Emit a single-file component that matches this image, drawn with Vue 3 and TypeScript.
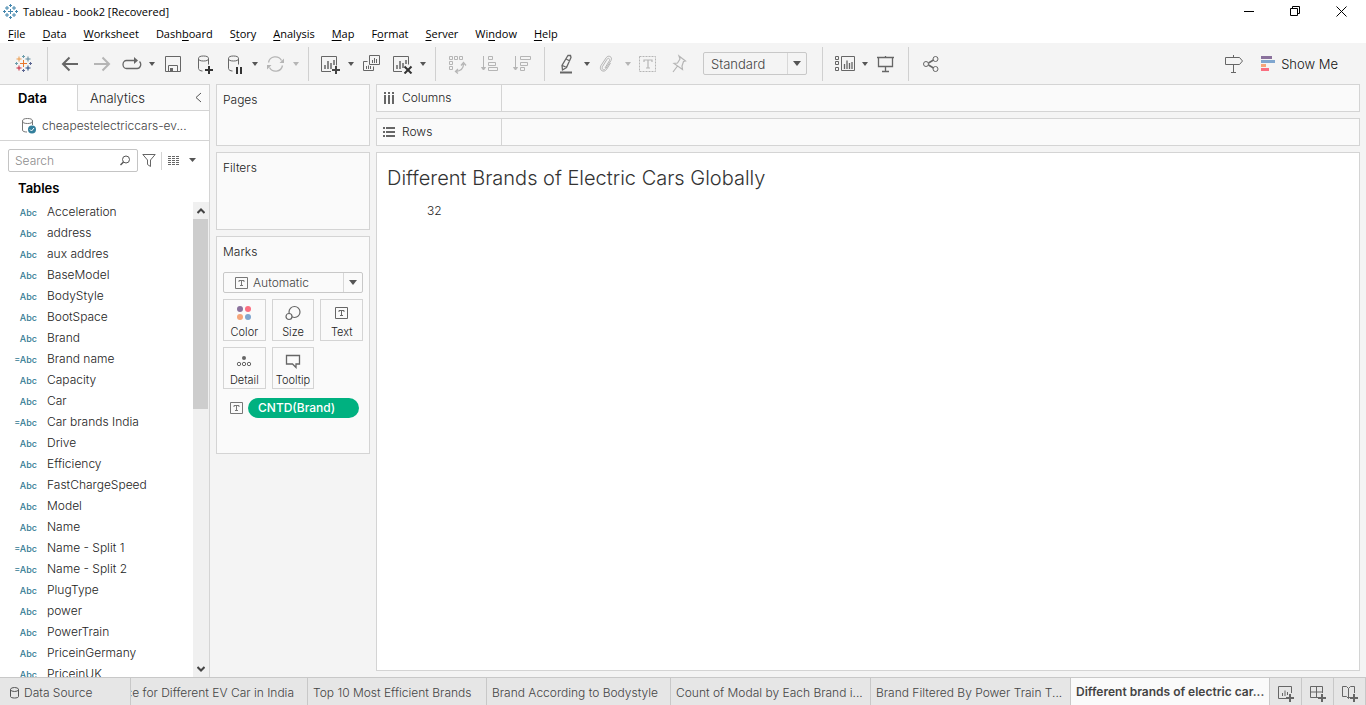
<script setup lang="ts">
import { ref } from 'vue'

interface MenuItem { before: string; key: string; after: string }
interface Tool { icon: string; label: string; caret?: boolean; disabled?: boolean }
interface Field { name: string; calculated?: boolean }
interface SheetTab { label: string; width: number; clipped?: boolean; active?: boolean }

const menu: MenuItem[] = [
  { before: '', key: 'F', after: 'ile' },
  { before: '', key: 'D', after: 'ata' },
  { before: '', key: 'W', after: 'orksheet' },
  { before: 'Dash', key: 'b', after: 'oard' },
  { before: 'S', key: 't', after: 'ory' },
  { before: '', key: 'A', after: 'nalysis' },
  { before: '', key: 'M', after: 'ap' },
  { before: 'F', key: 'o', after: 'rmat' },
  { before: '', key: 'S', after: 'erver' },
  { before: 'Wi', key: 'n', after: 'dow' },
  { before: '', key: 'H', after: 'elp' },
]

const icons: Record<string, string> = {
  back: '<path d="M19 11H4M10.500 4.500L4 11l6.500 6.500" stroke-width="2"/>',
  forward: '<path d="M4 11h15M12.500 4.500L19 11l-6.500 6.500" stroke-width="2"/>',
  replay: '<path d="M14 7.500H5.500a3.500 4 0 0 0 0 8h10.500a3.500 4 0 0 0 2.500-7" stroke-width="1.300"/><path d="M13 4l4 3.500-4 3.500z" fill="currentColor" stroke="none"/>',
  save: '<path d="M3.500 3.500h15v15h-15zM6.500 18.500v-6h9v6"/><path d="M8 15h3v4H8z" fill="currentColor" stroke="none"/>',
  dbAdd: '<ellipse cx="10.500" cy="5.500" rx="5" ry="2.500"/><path d="M5.500 5.500v10c0 1.500 2 2.500 4 2.500M15.500 5.500v6"/><path d="M16 13v8M12 17h8" stroke="#333" stroke-width="2"/>',
  dbPause: '<ellipse cx="9.500" cy="5.500" rx="5" ry="2.500"/><path d="M4.500 5.500v10c0 1.500 2 2.500 4 2.500M14.500 5.500v6"/><path d="M13 14v7M17 14v7" stroke="#333" stroke-width="2"/>',
  refresh: '<path d="M3.500 9.500a7 7 0 0 1 13-2M17.500 12.500a7 7 0 0 1-13 2" stroke-width="1.300"/><path d="M19 5.500v4.500h-4.500zM2 16.500V12h4.500z" fill="currentColor" stroke="none"/>',
  newSheet: '<path d="M11 18.500H1.500v-15h15v9"/><path d="M5 12v4M8 8v8M11 10v6M14 7v5" stroke-width="1.500"/><path d="M16 13v8M12 17h8" stroke="#444" stroke-width="2"/>',
  duplicate: '<path d="M8.500 2.500h10v9h-10zM6.500 8.500h-4v9h10v-4"/><path d="M11.500 7v3M13.500 5v5M15.500 6v4M5.500 13v3M7.500 12.500V16M9.500 13v3"/>',
  clearSheet: '<path d="M10 18.500H1.500v-15h15v8"/><path d="M5 12v4M8 8v8M11 10v5M14 7v4" stroke-width="1.500"/><path d="M12.500 13.500l7 7M19.500 13.500l-7 7" stroke="#333" stroke-width="2"/>',
  swap: '<path d="M2.500 3.500h3v3h-3zM7.500 3.500h3v3h-3zM12.500 3.500h3v3h-3zM2.500 8.500h3v3h-3zM2.500 13.500h3v3h-3z"/><path d="M16.500 11c0 4-3 7-8 7.500M14 12.500l2.500-3 2.500 3M11 16l-2.500 2.500 2.500 2" stroke-width="1.300"/>',
  sortAsc: '<path d="M4.500 3v13M9.500 3.500h4v3h-4zM9.500 9.500h7v3h-7zM9.500 14.500h9v3h-9z"/><path d="M2.500 14.500h4l-2 2.500z" fill="currentColor"/>',
  sortDesc: '<path d="M4.500 3v13M9.500 3.500h10v3h-10zM9.500 9.500h7v3h-7zM9.500 14.500h4v3h-4z"/><path d="M2.500 14.500h4l-2 2.500z" fill="currentColor"/>',
  highlight: '<path d="M11 4l1-1.500h2.500l.5 2-4.500 10-4 2.500-.5-4.500zM6.500 12.500l4 2M10 6l4 2" stroke-width="1.300"/><path d="M4 19.500h12" stroke-width="2"/>',
  clip: '<path d="M8 15l4.500-7.500c.8-2-1.500-3-2.500-1.200L5.500 13.500c-1.300 3 1.800 4.500 3.300 2L14 7.500c2-3.500-2.500-6-4.800-2.800L4 12.500c-2.500 5 3 7.500 5.500 4l4-6.500"/>',
  label: '<path d="M1.500 3.500h16v15h-16z" stroke-dasharray="2 1"/><path d="M6 9V7h8v2M10 7v8M8 15h4" stroke-width="1.200"/>',
  pin: '<path d="M10 3l6.500 5-2 .5-1.500 4.500.5 3.500-8.500-6 3.500-.5 2.500-4zM8.500 13l-4.500 6" stroke-width="1.200"/>',
  cards: '<path d="M1.500 3.500h3v3h-3zM1.500 8.500h3v3h-3zM1.500 14.500h3v3h-3zM7.500 3.500h13v14h-13z"/><path d="M10.500 11v5M13 7.500V16M15.500 10v6M18 9v7" stroke-width="1.300"/>',
  present: '<path d="M2 4.500h17M3.500 5v8.500h14V5M10.500 3v2M10.500 14v4M7 18.500h7" stroke-width="1.300"/>',
  share: '<circle cx="6" cy="11" r="2.500"/><circle cx="15.500" cy="6" r="2.500"/><circle cx="15.500" cy="16" r="2.500"/><path d="M8.500 10l5-3M8.500 12l5 3" stroke-width="1.500"/>',
  guide: '<path d="M10.500 2v2M2.500 4.500h14l3 3.500-3 3.500h-14zM10.500 12v7M8 19.500h5"/>',
}

const groups: Tool[][] = [
  [
    { icon: 'back', label: 'Undo' },
    { icon: 'forward', label: 'Redo', disabled: true },
    { icon: 'replay', label: 'Replay', caret: true },
    { icon: 'save', label: 'Save' },
    { icon: 'dbAdd', label: 'New data source' },
    { icon: 'dbPause', label: 'Pause auto updates', caret: true },
    { icon: 'refresh', label: 'Run update', caret: true, disabled: true },
  ],
  [
    { icon: 'newSheet', label: 'New worksheet', caret: true },
    { icon: 'duplicate', label: 'Duplicate' },
    { icon: 'clearSheet', label: 'Clear sheet', caret: true },
  ],
  [
    { icon: 'swap', label: 'Swap rows and columns', disabled: true },
    { icon: 'sortAsc', label: 'Sort ascending', disabled: true },
    { icon: 'sortDesc', label: 'Sort descending', disabled: true },
  ],
  [
    { icon: 'highlight', label: 'Highlight', caret: true },
    { icon: 'clip', label: 'Group members', caret: true, disabled: true },
    { icon: 'label', label: 'Show mark labels', disabled: true },
    { icon: 'pin', label: 'Fix axes', disabled: true },
  ],
  [
    { icon: 'cards', label: 'Show or hide cards', caret: true },
    { icon: 'present', label: 'Presentation mode' },
  ],
  [{ icon: 'share', label: 'Share' }],
]

const fields: Field[] = [
  { name: 'Acceleration' },
  { name: 'address' },
  { name: 'aux addres' },
  { name: 'BaseModel' },
  { name: 'BodyStyle' },
  { name: 'BootSpace' },
  { name: 'Brand' },
  { name: 'Brand name', calculated: true },
  { name: 'Capacity' },
  { name: 'Car' },
  { name: 'Car brands India', calculated: true },
  { name: 'Drive' },
  { name: 'Efficiency' },
  { name: 'FastChargeSpeed' },
  { name: 'Model' },
  { name: 'Name' },
  { name: 'Name - Split 1', calculated: true },
  { name: 'Name - Split 2', calculated: true },
  { name: 'PlugType' },
  { name: 'power' },
  { name: 'PowerTrain' },
  { name: 'PriceinGermany' },
  { name: 'PriceinUK' },
]

const textMark = '<path d="M.5.5h12v11H.5z"/><path d="M4 5V3.500h5V5M6.500 3.500v5M5 8.500h3"/>'

const marks = [
  { label: 'Color', art: '<g stroke="none"><circle cx="5" cy="4" r="3" fill="#8a719c"/><circle cx="13" cy="4" r="3" fill="#fa6e80"/><circle cx="5" cy="12" r="3" fill="#f5a57a"/><circle cx="13" cy="12" r="3" fill="#7fa6cf"/></g>' },
  { label: 'Size', art: '<circle cx="10.500" cy="7" r="5.500" stroke-width="1.200"/><circle cx="5" cy="11.500" r="3" fill="#fafafa" stroke-width="1.200"/>' },
  { label: 'Text', art: '<path d="M2.500 2.500h12v11h-12z"/><path d="M6 7V5.500h5V7M8.500 5.500v5M7 10.500h3"/>' },
  { label: 'Detail', art: '<circle cx="9" cy="5" r="2" fill="currentColor" stroke="none"/><circle cx="4" cy="11" r="1.700"/><circle cx="9" cy="11" r="1.700"/><circle cx="14" cy="11" r="1.700"/>' },
  { label: 'Tooltip', art: '<path d="M2.500 2.500h13v8.500h-3.500v3.500L8.500 11h-6z" stroke-width="1.300"/>' },
]

const sheets: SheetTab[] = [
  { label: 'Price for Different EV Car in India', width: 177, clipped: true },
  { label: 'Top 10 Most Efficient Brands', width: 179 },
  { label: 'Brand According to Bodystyle', width: 184 },
  { label: 'Count of Modal by Each Brand i...', width: 200 },
  { label: 'Brand Filtered By Power Train T...', width: 200 },
  { label: 'Different brands of electric car...', width: 199, active: true },
]

const adders = [
  { label: 'New Worksheet', art: '<path d="M9 13.500H1.500v-12h13V8"/><path d="M5.500 8v3M8 5.500V11M10.500 7v3"/>' },
  { label: 'New Dashboard', art: '<path d="M9 12.500H1.500v-11h12V8M7.500 1.500v11M1.500 7h12"/>' },
  { label: 'New Story', art: '<path d="M9 12l-1.500 1.500-2-2h-4v-10h4l2 2 2-2h4V8M7.500 3.500v10"/>' },
]

const search = ref('')
const fit = ref('Standard')
const markType = ref('Automatic')
</script>

<template>
  <div class="app">
    <header class="titlebar">
      <svg class="app-icon" width="15" height="15" viewBox="0 0 15 15" fill="none" stroke="#4386ad">
        <path d="M7.500 5v5M5 7.500h5M4 2v4M2 4h4M11 2v4M9 4h4M4 9v4M2 11h4M11 9v4M9 11h4M7.500 0v3M6 1.500h3M7.500 12v3M6 13.500h3M1.500 6v3M0 7.500h3M13.500 6v3M12 7.500h3" />
      </svg>
      <span class="window-title">Tableau - book2 [Recovered]</span>
      <div class="window-controls">
        <button type="button" aria-label="Minimize"><svg width="11" height="11" viewBox="0 0 11 11"><path d="M0 5.500h10" /></svg></button>
        <button type="button" aria-label="Restore"><svg width="11" height="11" viewBox="0 0 11 11"><path d="M.5 2.500h7v7h-7zM2.500 2.500v-2h7v7h-2" /></svg></button>
        <button type="button" aria-label="Close"><svg width="11" height="11" viewBox="0 0 11 11"><path d="M.5.5l10 10M10.500.5l-10 10" /></svg></button>
      </div>
    </header>

    <nav class="menubar">
      <button v-for="m in menu" :key="m.before + m.key + m.after" type="button">{{ m.before }}<u>{{ m.key }}</u>{{ m.after }}</button>
    </nav>

    <div class="toolbar" role="toolbar">
      <button class="start" type="button" aria-label="Start page">
        <svg width="19" height="19" viewBox="0 0 19 19" fill="none">
          <path d="M9.500 6v7M6 9.500h7" stroke="#e8762d" />
          <path d="M5 2.500v5M2.500 5h5" stroke="#eb9a4a" />
          <path d="M14 2.500v5M11.500 5h5" stroke="#5b879b" />
          <path d="M5 11.500v5M2.500 14h5" stroke="#c72037" />
          <path d="M14 11.500v5M11.500 14h5" stroke="#1f457e" />
          <path d="M9.500 1v3M8 2.500h3M2.500 8v3M1 9.500h3" stroke="#6d9dab" />
          <path d="M9.500 15v3M8 16.500h3M16.500 8v3M15 9.500h3" stroke="#5c6692" />
        </svg>
      </button>
      <div v-for="(group, gi) in groups" :key="gi" class="group" :class="{ spaced: gi === 2 }">
        <template v-for="tool in group" :key="tool.icon">
          <button class="tool" type="button" :class="{ dim: tool.disabled }" :aria-label="tool.label">
            <svg width="21" height="21" viewBox="0 0 21 21" v-html="icons[tool.icon]"></svg>
          </button>
          <button v-if="tool.caret" class="tool-caret" type="button" :class="{ dim: tool.disabled }" :aria-label="tool.label + ' options'">
            <svg width="6" height="4" viewBox="0 0 6 4"><path d="M0 0h6L3 4z" /></svg>
          </button>
        </template>
        <div v-if="gi === 3" class="picker fit">
          <select v-model="fit" aria-label="Fit">
            <option>Standard</option>
            <option>Entire View</option>
          </select>
          <svg width="8" height="5" viewBox="0 0 8 5"><path d="M0 0h8L4 5z" /></svg>
        </div>
      </div>
      <div class="right-tools">
        <button class="tool" type="button" aria-label="Data guide">
          <svg width="21" height="21" viewBox="0 0 21 21" v-html="icons.guide"></svg>
        </button>
        <button class="show-me" type="button">
          <svg width="15" height="15" viewBox="0 0 15 15">
            <path d="M0 0h11v3H0z" fill="#8a719c" /><path d="M0 4h14v3H0z" fill="#7fa6cf" />
            <path d="M0 8h5v3H0z" fill="#f5a57a" /><path d="M0 12h8v3H0z" fill="#fa6e80" />
          </svg>
          Show Me
        </button>
      </div>
    </div>

    <div class="workspace">
      <aside class="data-pane">
        <div class="pane-tabs">
          <button class="pane-tab current" type="button">Data</button>
          <button class="pane-tab other" type="button">
            Analytics
            <svg width="7" height="11" viewBox="0 0 7 11"><path d="M6 1L1 5.500 6 10" /></svg>
          </button>
        </div>
        <button class="source" type="button">
          <svg width="15" height="16" viewBox="0 0 15 16" fill="none" stroke="#777">
            <ellipse cx="5.500" cy="3" rx="5" ry="2.500" /><path d="M.5 3v9c0 1.500 2 2 4.500 2M10.500 3v4" />
            <circle cx="10" cy="11.500" r="4" fill="#337f9c" stroke="none" /><path d="M8 11.500l1.500 1.500 2.500-3" stroke="#fff" />
          </svg>
          cheapestelectriccars-ev...
        </button>
        <div class="search-row">
          <div class="search">
            <input v-model="search" type="text" placeholder="Search" aria-label="Search fields" />
            <svg width="11" height="11" viewBox="0 0 11 11" fill="none" stroke="#555"><circle cx="6" cy="4.500" r="3.500" /><path d="M3.500 7L.5 10" stroke-width="1.500" /></svg>
          </div>
          <button class="plain" type="button" aria-label="Filter fields">
            <svg width="14" height="13" viewBox="0 0 14 13" fill="none" stroke="#666"><path d="M.8.500h12.400L8.500 6v6.500L5.500 10.500V6z" /></svg>
          </button>
          <button class="plain view" type="button" aria-label="View options">
            <svg width="12" height="10" viewBox="0 0 12 10" stroke="#666" stroke-dasharray="3 1"><path d="M0 .5h12M0 2.500h12M0 4.500h12M0 6.500h12M0 8.500h12" /></svg>
            <svg width="7" height="5" viewBox="0 0 7 5"><path d="M0 0h7L3.500 4z" fill="#555" /></svg>
          </button>
        </div>
        <h2 class="tables">Tables</h2>
        <div class="list-area">
          <ul class="fields">
            <li v-for="f in fields" :key="f.name">
              <span class="type"><i v-if="f.calculated">=</i>Abc</span><span>{{ f.name }}</span>
            </li>
          </ul>
          <div class="scrollbar">
            <button type="button" aria-label="Scroll up"><svg width="8" height="6" viewBox="0 0 8 6"><path d="M.5 5L4 1.500 7.500 5" /></svg></button>
            <div class="thumb"></div>
            <button type="button" aria-label="Scroll down"><svg width="8" height="6" viewBox="0 0 8 6"><path d="M.5 1L4 4.500 7.500 1" /></svg></button>
          </div>
        </div>
      </aside>

      <div class="cards">
        <section class="card pages"><h3>Pages</h3></section>
        <section class="card filters"><h3>Filters</h3></section>
        <section class="card marks">
          <h3>Marks</h3>
          <div class="picker mark-type">
            <svg class="lead" width="13" height="12" viewBox="0 0 13 12" v-html="textMark"></svg>
            <select v-model="markType" aria-label="Mark type">
              <option>Automatic</option>
              <option>Text</option>
            </select>
            <svg width="8" height="5" viewBox="0 0 8 5"><path d="M0 0h8L4 5z" /></svg>
          </div>
          <div class="mark-grid">
            <button v-for="m in marks" :key="m.label" type="button">
              <svg width="18" height="16" viewBox="0 0 18 16" v-html="m.art"></svg>
              {{ m.label }}
            </button>
          </div>
          <div class="pill-row">
            <svg class="lead" width="13" height="12" viewBox="0 0 13 12" v-html="textMark"></svg>
            <button class="pill" type="button">CNTD(Brand)</button>
          </div>
        </section>
      </div>

      <main class="view">
        <div class="shelf">
          <div class="shelf-name">
            <svg width="12" height="12" viewBox="0 0 12 12"><path d="M1 0h2v2H1zM5 0h2v2H5zM9 0h2v2H9zM1 3h2v9H1zM5 3h2v9H5zM9 3h2v9H9z" /></svg>
            Columns
          </div>
        </div>
        <div class="shelf">
          <div class="shelf-name">
            <svg width="12" height="12" viewBox="0 0 12 12"><path d="M0 1h2v2H0zM3 1h9v2H3zM0 5h2v2H0zM3 5h9v2H3zM0 9h2v2H0zM3 9h9v2H3z" /></svg>
            Rows
          </div>
        </div>
        <section class="sheet">
          <h1>Different Brands of Electric Cars Globally</h1>
          <p>32</p>
        </section>
      </main>
    </div>

    <footer class="tabs">
      <button class="tab data-source" type="button">
        <svg width="9" height="12" viewBox="0 0 9 12" fill="none" stroke="#555"><ellipse cx="4.500" cy="2.500" rx="4" ry="2" /><path d="M.5 2.500v7c0 2 8 2 8 0v-7" /></svg>
        Data Source
      </button>
      <button
        v-for="s in sheets"
        :key="s.label"
        class="tab"
        type="button"
        :class="{ clipped: s.clipped, active: s.active }"
        :style="{ flexBasis: s.width + 'px' }"
      >{{ s.label }}</button>
      <button v-for="a in adders" :key="a.label" class="tab adder" type="button" :aria-label="a.label">
        <svg width="17" height="17" viewBox="0 0 17 17"><g v-html="a.art"></g><path d="M13 9v8M9 13h8" stroke-width="2" /></svg>
      </button>
    </footer>
  </div>
</template>

<style>
body {
  margin: 0;
}
</style>

<style scoped>
.app {
  display: flex;
  flex-direction: column;
  height: 100vh;
  overflow: hidden;
  background: #f4f4f4;
  color: #222;
  font: 300 12px/18px Inter, "Liberation Sans", sans-serif;
}
.app * {
  box-sizing: border-box;
}
button {
  margin: 0;
  padding: 0;
  border: 0;
  background: none;
  color: inherit;
  font: inherit;
  white-space: nowrap;
}
svg {
  display: block;
  flex: none;
}
h1, h2, h3, p, ul {
  margin: 0;
  padding: 0;
}

.titlebar,
.menubar {
  display: flex;
  flex: none;
  background: #fff;
  color: #000;
  font-family: "Open Sans", "Noto Sans", sans-serif;
  font-size: 11px;
  font-weight: 400;
}
.titlebar {
  align-items: center;
  height: 23px;
  padding: 0 2px 0 3px;
}
.app-icon {
  margin-right: 5px;
}
.window-controls {
  display: flex;
  margin-left: auto;
}
.window-controls button {
  display: flex;
  justify-content: center;
  width: 46px;
}
.window-controls path {
  fill: none;
  stroke: #000;
}
.menubar {
  gap: 17px;
  height: 20px;
  padding: 2px 0 0 8px;
}
.menubar u {
  text-underline-offset: 2px;
}

.toolbar {
  display: flex;
  flex: none;
  align-items: center;
  height: 41px;
  color: #666;
}
.start {
  display: flex;
  justify-content: center;
  width: 47px;
}
.group {
  display: flex;
  align-items: center;
  height: 34px;
  padding: 0 7px 0 6px;
  border-left: 1px solid #d0d0d0;
}
.spaced {
  gap: 1px;
}
.tool {
  padding: 0 5px;
}
.tool svg {
  fill: none;
  stroke: currentColor;
}
.tool-caret {
  display: flex;
  justify-content: center;
  width: 10px;
}
.tool-caret svg {
  fill: #555;
}
.dim {
  color: #b5b5b5;
}
.tool-caret.dim svg {
  fill: #b5b5b5;
}
.picker {
  display: flex;
  align-items: center;
  border: 1px solid #c8c8c8;
  border-radius: 2px;
}
.picker select {
  flex: 1;
  align-self: stretch;
  min-width: 0;
  padding: 0;
  border: 0;
  border-right: 1px solid #d8d8d8;
  appearance: none;
  background: transparent;
  color: #444;
  font: inherit;
}
.picker > svg:last-child {
  margin: 0 5px;
  fill: #555;
}
.fit {
  width: 104px;
  height: 23px;
  margin: 0 8px;
  font-size: 13px;
}
.fit select {
  padding-left: 7px;
}
.right-tools {
  display: flex;
  align-items: center;
  margin-left: auto;
  padding-right: 28px;
}
.show-me {
  display: flex;
  align-items: center;
  gap: 5px;
  margin-left: 12px;
  color: #111;
  font-size: 13px;
}

.workspace {
  display: flex;
  flex: 1;
  min-height: 0;
}
.data-pane {
  display: flex;
  flex: none;
  flex-direction: column;
  width: 210px;
  border-top: 1px solid #d4d4d4;
  border-right: 1px solid #d4d4d4;
  background: #fff;
}
.pane-tabs {
  display: flex;
  flex: none;
  height: 26px;
  font-size: 13px;
}
.pane-tab.current {
  width: 77px;
  padding-left: 18px;
  color: #000;
  font-weight: 600;
  text-align: left;
}
.pane-tab.other {
  display: flex;
  flex: 1;
  align-items: center;
  justify-content: space-between;
  padding: 0 7px 0 12px;
  border-bottom: 1px solid #d4d4d4;
  border-left: 1px solid #d4d4d4;
  background: #fafafa;
}
.pane-tab svg {
  fill: none;
  stroke: #555;
}
.source {
  display: flex;
  flex: none;
  align-items: center;
  gap: 5px;
  height: 30px;
  padding-left: 22px;
  border-bottom: 1px solid #d4d4d4;
  color: #444;
}
.search-row {
  display: flex;
  flex: none;
  align-items: center;
  gap: 4px;
  padding: 8px 12px 0 8px;
}
.search {
  display: flex;
  align-items: center;
  width: 130px;
  height: 23px;
  padding: 0 6px;
  border: 1px solid #c4c4c4;
  border-radius: 2px;
}
.search input {
  flex: 1;
  min-width: 0;
  padding: 0;
  border: 0;
  outline: 0;
  background: none;
  font: inherit;
}
.search input::placeholder {
  color: #8c8c8c;
}
.view.plain {
  display: flex;
  align-items: center;
  gap: 9px;
  height: 18px;
  margin-left: 1px;
  padding-left: 6px;
  border-left: 1px solid #d4d4d4;
}
.tables {
  flex: none;
  padding: 7px 18px 5px;
  color: #000;
  font-size: 13px;
  font-weight: 600;
  line-height: 18px;
}
.list-area {
  display: flex;
  flex: 1;
  min-height: 0;
}
.fields {
  flex: 1;
  overflow: hidden;
  list-style: none;
}
.fields li {
  display: flex;
  gap: 10px;
  height: 21px;
  line-height: 19px;
}
.type {
  width: 37px;
  padding-top: 1px;
  color: #327a93;
  font-size: 9px;
  font-weight: 500;
  text-align: right;
}
.type i {
  font-style: normal;
}
.scrollbar {
  display: flex;
  flex-direction: column;
  width: 16px;
  background: #f0f0f0;
}
.scrollbar button {
  display: flex;
  align-items: center;
  justify-content: center;
  height: 17px;
}
.scrollbar button:last-child {
  margin-top: auto;
}
.scrollbar path {
  fill: none;
  stroke: #444;
  stroke-width: 2px;
}
.thumb {
  height: 40%;
  margin-right: 1px;
  background: #cdcdcd;
}

.cards {
  display: flex;
  flex: none;
  flex-direction: column;
  gap: 6px;
  width: 154px;
  margin-left: 6px;
}
.card {
  padding: 6px;
  border: 1px solid #d4d4d4;
  background: #fafafa;
}
.card h3 {
  color: #222;
  font-size: 12px;
  font-weight: 300;
}
.pages {
  min-height: 62px;
}
.filters {
  min-height: 78px;
}
.marks {
  min-height: 218px;
}
.mark-type {
  height: 21px;
  margin-top: 11px;
}
.lead {
  fill: none;
  stroke: #777;
}
.mark-type .lead {
  margin: 0 5px 0 11px;
}
.mark-grid {
  display: grid;
  grid-template-columns: repeat(3, 1fr);
  gap: 6px;
  margin-top: 6px;
}
.mark-grid button {
  display: flex;
  flex-direction: column;
  align-items: center;
  gap: 2px;
  height: 42px;
  padding-top: 5px;
  border: 1px solid #d4d4d4;
  font-size: 11px;
}
.mark-grid svg {
  fill: none;
  stroke: #666;
  color: #666;
}
.pill-row {
  display: flex;
  align-items: center;
  gap: 5px;
  margin-top: 9px;
  padding: 0 4px 0 7px;
}
.pill {
  flex: 1;
  height: 20px;
  padding-left: 10px;
  border-radius: 10px;
  background: #00b180;
  color: #fff;
  font-weight: 500;
  text-align: left;
}

main.view {
  display: flex;
  flex: 1;
  flex-direction: column;
  gap: 6px;
  min-width: 0;
  padding: 0 6px 6px;
}
.shelf {
  display: flex;
  flex: none;
  height: 28px;
  border: 1px solid #d4d4d4;
  background: #fafafa;
}
.shelf-name {
  display: flex;
  align-items: center;
  gap: 7px;
  width: 125px;
  padding-left: 6px;
  border-right: 1px solid #d4d4d4;
}
.shelf svg {
  fill: #666;
}
.sheet {
  flex: 1;
  padding: 12px 10px;
  border: 1px solid #d4d4d4;
  background: #fff;
}
.sheet h1 {
  color: #333;
  font-size: 20px;
  font-weight: 300;
  line-height: 26px;
}
.sheet p {
  padding: 11px 40px;
}

.tabs {
  display: flex;
  flex: none;
  height: 28px;
  border-top: 1px solid #c8c8c8;
  background: #e6e6e6;
  color: #444;
}
.tab {
  flex: 0 1 auto;
  overflow: hidden;
  padding: 3px 5px 0;
  border-right: 1px solid #c8c8c8;
  text-align: left;
}
.data-source {
  display: flex;
  flex: 0 0 131px;
  align-items: center;
  gap: 5px;
  padding-left: 10px;
}
.clipped {
  display: flex;
  align-items: center;
  justify-content: flex-end;
  padding-right: 13px;
}
.active {
  padding-top: 1px;
  background: #fafafa;
  font-weight: 600;
}
.adder {
  display: flex;
  flex: 0 0 32px;
  align-items: center;
  justify-content: center;
}
.adder svg {
  fill: none;
  stroke: #666;
}
</style>
